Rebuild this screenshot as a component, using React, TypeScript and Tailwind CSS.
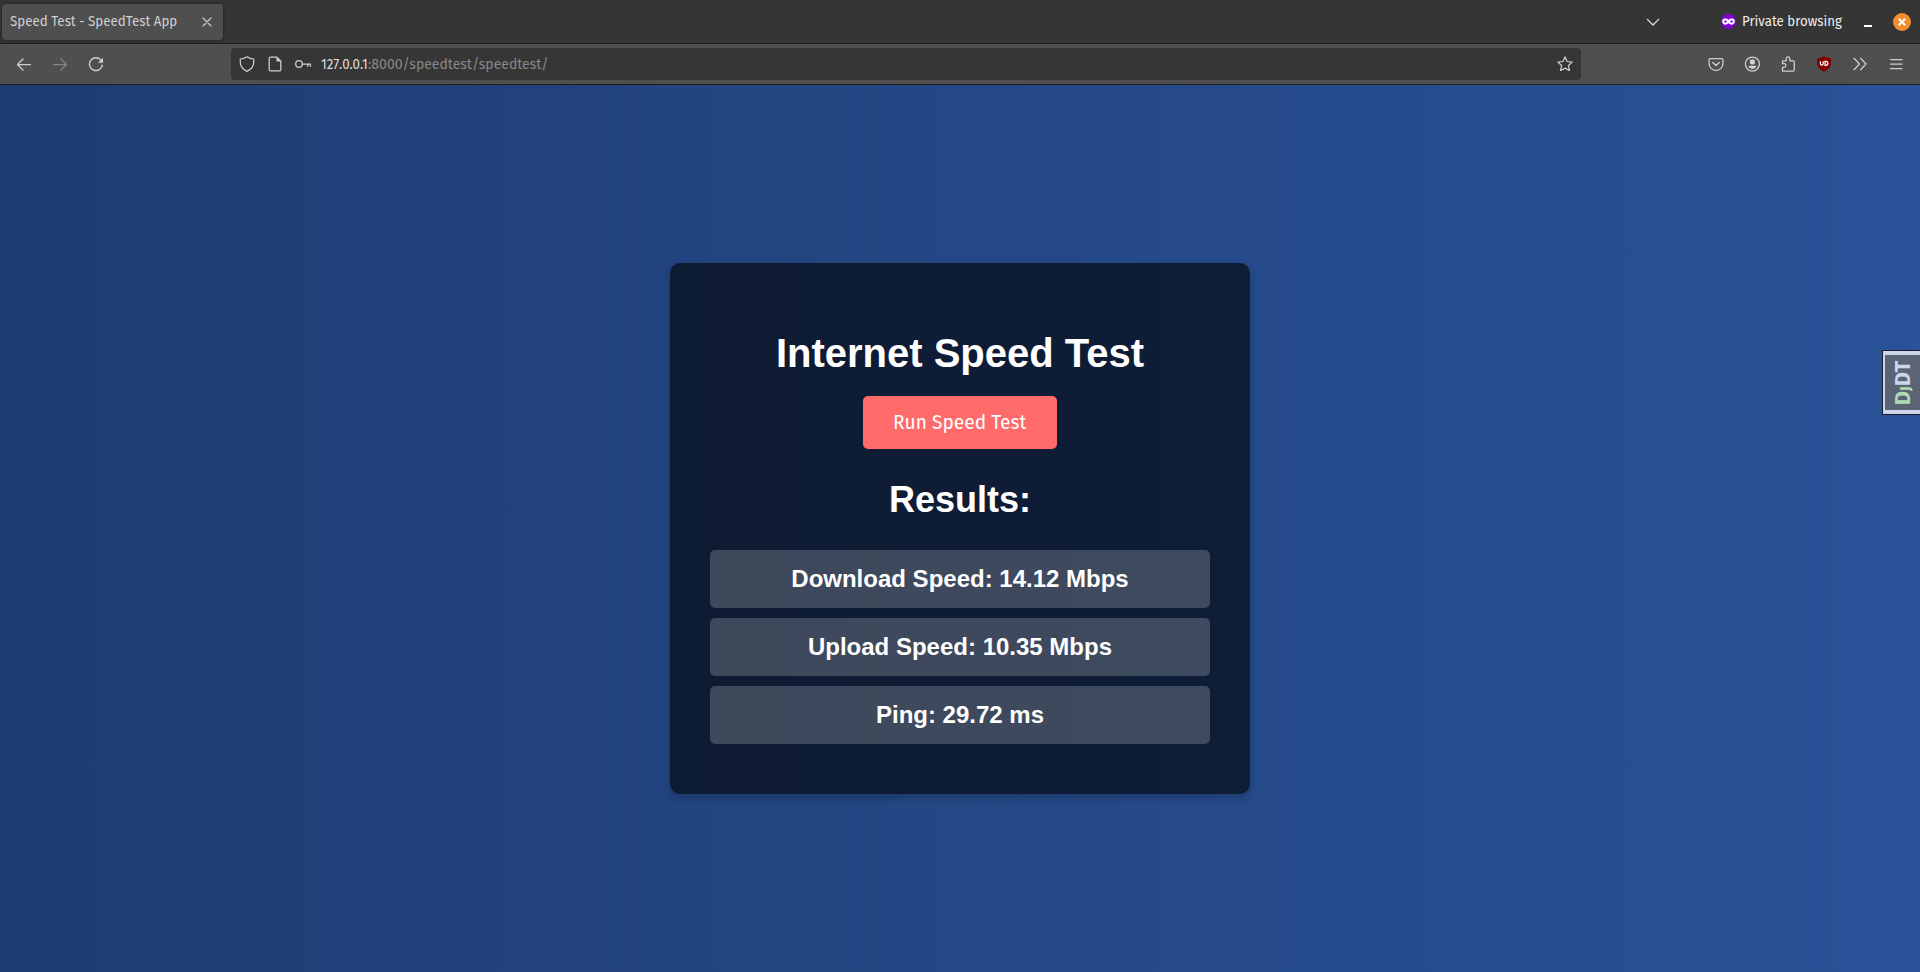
import type { ReactNode } from "react";

const ui = "font-['Fira_Sans','Noto_Sans',sans-serif]";

function Svg({ children, size = 16, className = "" }: { children: ReactNode; size?: number; className?: string }) {
  return (
    <svg
      width={size}
      height={size}
      viewBox="0 0 16 16"
      fill="none"
      stroke="currentColor"
      strokeWidth="1.25"
      strokeLinecap="round"
      strokeLinejoin="round"
      className={`shrink-0 ${className}`}
    >
      {children}
    </svg>
  );
}

function TabBar() {
  return (
    <div className={`flex h-11 shrink-0 items-center border-b border-[#1f1f1f] bg-[#353535] pl-0.5 pr-[9px] ${ui}`}>
      <div className="flex h-9 w-[221px] items-center justify-between rounded bg-[#4f4f4f] px-2 text-[#d0d0d0] shadow-[0_0_3px_rgba(0,0,0,0.5)]">
        <div className="w-[170px] pb-0.5">
          <span className="inline-block origin-left scale-x-[0.952] whitespace-nowrap text-sm leading-5">
            Speed Test - SpeedTest App
          </span>
        </div>
        <Svg>
          <path d="M4 4l8 8M12 4l-8 8" strokeWidth="1.1" />
        </Svg>
      </div>
      <div className="flex-1" />
      <Svg className="mr-[60px] text-[#e0e0e0]">
        <path d="M2.4 5.4L8 11l5.600-5.600" strokeWidth="1.3" />
      </Svg>
      <svg width="15" height="15" viewBox="0 0 16 16" className="shrink-0">
        <circle cx="8" cy="8" r="8" fill="#7f00d6" />
        <path
          d="M8 6.400C6.700 4.500 1.700 4.100 1.300 7.200c-.3 2.500 1.400 4.200 3.400 4.200C6.300 11.400 7.200 9.900 8 9.900s1.700 1.500 3.300 1.500c2 0 3.700-1.700 3.400-4.200C14.300 4.100 9.300 4.500 8 6.400z"
          fill="#fff"
        />
        <ellipse cx="4.700" cy="8.100" rx="1.500" ry="1.100" fill="#7f00d6" />
        <ellipse cx="11.300" cy="8.100" rx="1.500" ry="1.100" fill="#7f00d6" />
      </svg>
      <div className="ml-[5px] w-[102px] pb-0.5 pl-px text-[#ececec]">
        <span className="inline-block origin-left scale-x-[0.95] whitespace-nowrap text-sm leading-5">
          Private browsing
        </span>
      </div>
      <div className="ml-[21px] mt-2 h-0.5 w-2 bg-white" />
      <div className="ml-[21px] grid size-[18px] place-items-center rounded-full bg-[#f28e2d]">
        <svg width="8" height="8" viewBox="0 0 8 8" stroke="#fff" strokeWidth="2">
          <path d="M.7.7l6.600 6.600M7.300.7L.7 7.300" />
        </svg>
      </div>
    </div>
  );
}

function Toolbar() {
  return (
    <div className={`flex h-[41px] shrink-0 items-center border-b border-[#1f1f1f] bg-[#4f4f4f] px-4 text-[#cfcfcf] ${ui}`}>
      <Svg>
        <path d="M14.500 8.500H1.500M7 3L1.500 8.500 7 14" />
      </Svg>
      <Svg className="ml-5 text-[#858585]">
        <path d="M1.500 8.500h13M9 3L14.500 8.500 9 14" />
      </Svg>
      <Svg className="ml-5">
        <path d="M14.200 9.300A6.400 6.400 0 1 1 12.700 3.900" strokeWidth="1.400" />
        <path d="M15 1.800v5H10z" fill="currentColor" stroke="none" />
      </Svg>
      <div className="ml-[127px] flex h-8 w-[1350px] items-center rounded bg-[#363636] px-2">
        <Svg>
          <path d="M8 .8c2 1.400 4.300 2.100 6.700 2.200v3.500c0 3.800-2.400 6.700-6.700 8.900C3.700 13.200 1.300 10.300 1.300 6.500V3C3.700 2.900 6 2.200 8 .8z" />
        </Svg>
        <Svg className="ml-3">
          <path d="M3.500 1.200h6.300l4 4v8.200a1.500 1.500 0 0 1-1.500 1.500H3.700a1.500 1.500 0 0 1-1.500-1.500V2.700A1.500 1.500 0 0 1 3.500 1.200z" />
          <path d="M9.500 1l4.500 4.500H9.500z" fill="currentColor" stroke="none" />
        </Svg>
        <Svg className="ml-3">
          <circle cx="4" cy="8" r="3.300" />
          <path d="M7.300 8h8.200v2.400M12.800 8v2.400" />
        </Svg>
        <div className="ml-2.5 flex pt-px text-sm leading-[22px]">
          <div className="w-[47px]">
            <span className="inline-block origin-left scale-x-[0.95] whitespace-nowrap text-[#dcdcdc]">127.0.0.1</span>
          </div>
          <span className="whitespace-nowrap text-[#888888]">:8000/speedtest/speedtest/</span>
        </div>
        <div className="flex-1" />
        <Svg>
          <path d="M8 .9l2.100 4.600 5 .6-3.700 3.400 1 5L8 12.100l-4.400 2.400 1-5L.9 6.100l5-.6z" />
        </Svg>
      </div>
      <div className="ml-[127px] flex flex-1 items-center justify-between">
        <Svg>
          <path d="M2.300 2.500h11.400a1.200 1.200 0 0 1 1.200 1.200v3.800a6.900 6.900 0 0 1-13.800 0V3.700a1.200 1.200 0 0 1 1.200-1.200z" />
          <path d="M4.800 6.500L8 9.500l3.200-3" strokeWidth="1.500" />
        </Svg>
        <Svg>
          <circle cx="8.400" cy="8" r="7" />
          <circle cx="8.400" cy="5.900" r="2.600" fill="currentColor" stroke="none" />
          <path d="M4.300 9.700h8.200c-.5 2-2.200 3.200-4.100 3.200s-3.600-1.200-4.100-3.200z" fill="currentColor" stroke="none" />
        </Svg>
        <Svg>
          <path d="M2.500 15v-3.700h1.600a1.800 1.800 0 0 0 0-3.600H2.500V5.600a.8.8 0 0 1 .8-.8h2.900V2.700a1.800 1.800 0 0 1 3.600 0v2.100h3.300A1.200 1.200 0 0 1 14.300 6v7.800a1.200 1.200 0 0 1-1.200 1.200z" />
        </Svg>
        <svg width="16" height="16" viewBox="0 0 16 16" className="shrink-0">
          <path d="M8 .3c2 1.300 4.700 1.900 7 2v4.400c0 4.200-2.800 6.900-7 9-4.200-2.100-7-4.800-7-9V2.300C3.300 2.200 6 1.600 8 .3z" fill="#800000" />
          <path d="M4.400 5.300v2.500a1.400 1.400 0 0 0 2.800 0V5.300M9 5.300v4h.9a2 2 0 0 0 0-4z" fill="none" stroke="#fff" strokeWidth="1.200" />
        </svg>
        <Svg>
          <path d="M2 2.300L7.500 8 2 13.700M8.500 2.300L14 8l-5.500 5.700" />
        </Svg>
        <Svg>
          <path d="M2.500 3.500h11.500M2.500 8h11.500M2.500 12.500h11.500" />
        </Svg>
      </div>
    </div>
  );
}

const results = ["Download Speed: 14.12 Mbps", "Upload Speed: 10.35 Mbps", "Ping: 29.72 ms"];

export default function App() {
  return (
    <div className="flex h-[972px] w-[1920px] flex-col overflow-hidden">
      <TabBar />
      <Toolbar />
      <main className="relative flex flex-1 items-center justify-center bg-[linear-gradient(to_right,#1e3c72,#2a5298)] font-['Liberation_Sans',Arial,sans-serif] text-white">
        <section className="flex h-[531px] w-[580px] flex-col items-center rounded-[10px] bg-black/60 px-10 pt-[67px] shadow-[0_4px_8px_rgba(0,0,0,0.2)]">
          <h1 className="text-[40px] font-bold leading-[46px]">Internet Speed Test</h1>
          <button className={`mt-5 flex h-[53px] w-[194px] items-center justify-center rounded-[5px] bg-[#ff6b6b] pb-0.5 ${ui}`}>
            <span className="inline-block scale-x-[0.945] whitespace-nowrap text-[20.300px] leading-7">Run Speed Test</span>
          </button>
          <h2 className="mt-[30px] text-[36px] font-bold leading-[41px]">Results:</h2>
          <ul className="mt-[30px] flex w-full flex-col gap-2.5">
            {results.map((r) => (
              <li key={r} className="flex h-[58px] items-center justify-center rounded-[5px] bg-white/20 text-2xl font-bold">
                {r}
              </li>
            ))}
          </ul>
        </section>
        <div className="absolute right-0 top-[265px] flex h-[65px] w-[38px] items-center justify-center border border-r-0 border-[#1b1f2c] bg-[#cbd6ea]">
          <div className="ml-1 flex h-[55px] w-full items-center justify-center bg-[#5b6475]">
            <span className="-rotate-90 whitespace-nowrap font-['Fira_Sans','Noto_Sans',sans-serif] text-[22px] font-bold leading-none text-[#cbd6ea]">
              <span className="text-[#b0dab4]">
                D<span className="text-[15px]">J</span>
              </span>
              DT
            </span>
          </div>
        </div>
      </main>
    </div>
  );
}
